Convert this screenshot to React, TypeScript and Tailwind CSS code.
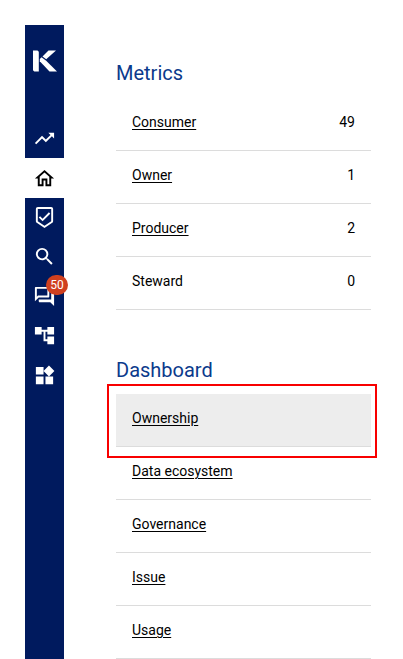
import React from 'react';
import clsx from 'clsx';
import type { IconType } from 'react-icons';
import {
  MdAccountTree,
  MdOutlineBeenhere,
  MdOutlineForum,
  MdOutlineHome,
  MdSearch,
  MdTrendingUp,
  MdWidgets,
} from 'react-icons/md';

interface NavItem {
  label: string;
  icon: IconType;
  active?: boolean;
  badge?: number;
}

const navItems: NavItem[] = [
  { label: 'Trends', icon: MdTrendingUp },
  { label: 'Home', icon: MdOutlineHome, active: true },
  { label: 'Governance', icon: MdOutlineBeenhere },
  { label: 'Search', icon: MdSearch },
  { label: 'Issues', icon: MdOutlineForum, badge: 50 },
  { label: 'Lineage', icon: MdAccountTree },
  { label: 'Apps', icon: MdWidgets },
];

const metrics = [
  { name: 'Consumer', count: 49, linked: true },
  { name: 'Owner', count: 1, linked: true },
  { name: 'Producer', count: 2, linked: true },
  { name: 'Steward', count: 0, linked: false },
];

const dashboards = ['Ownership', 'Data ecosystem', 'Governance', 'Issue', 'Usage'];

const Logo = () => (
  <svg viewBox="0 0 24 22" className="w-6 h-[22px] fill-white" aria-hidden="true">
    <path d="M0 .5h4.500l1.300 1.300V21.500H1.300L0 20.200z" />
    <path d="M15.500 .5H23L13.200 9.300 9.500 6.400z" />
    <path d="M8.600 7.200l4.600 3.600L24 21.500h-7.500L6.800 11.200V9z" />
  </svg>
);

const Sidebar = () => (
  <nav className="w-[39px] shrink-0 bg-[#001a5e]">
    <a href="#" aria-label="K" className="flex h-[94px] justify-center pt-[25px]">
      <Logo />
    </a>
    <div className="grid grid-rows-7 h-[276px]">
      {navItems.map(({ label, icon: Icon, active, badge }) => (
        <button
          key={label}
          type="button"
          aria-label={label}
          className={clsx(
            'relative flex items-center justify-center cursor-pointer',
            active ? 'bg-white text-black' : 'text-white'
          )}
        >
          <Icon className="w-[23px] h-[23px]" />
          {badge && (
            <span className="absolute -top-0.5 -right-1 flex w-[22px] h-5 items-center justify-center rounded-full bg-[#d0401f] text-xs text-white">
              {badge}
            </span>
          )}
        </button>
      ))}
    </div>
  </nav>
);

const SectionTitle = ({ children }: { children: React.ReactNode }) => (
  <h2 className="text-xl leading-6 text-[#0b3a8c]">{children}</h2>
);

export default function App() {
  return (
    <div className="flex min-h-screen bg-white pt-[25px] pl-[25px] font-['Roboto',sans-serif] text-sm text-black">
      <Sidebar />
      <main className="flex-1 pl-[52px] pr-8 pt-9">
        <section>
          <SectionTitle>Metrics</SectionTitle>
          <table className="mt-3 w-full border-collapse">
            <tbody>
              {metrics.map(({ name, count, linked }) => (
                <tr key={name} className="h-[53px] border-b border-[#dcdcdc]">
                  <th scope="row" className="pb-[3px] pl-4 text-left font-normal">
                    {linked ? (
                      <a href="#" className="underline underline-offset-2">
                        {name}
                      </a>
                    ) : (
                      name
                    )}
                  </th>
                  <td className="pb-[3px] pr-4 text-right">{count}</td>
                </tr>
              ))}
            </tbody>
          </table>
        </section>

        <section className="mt-12">
          <SectionTitle>Dashboard</SectionTitle>
          <ul className="mt-3">
            {dashboards.map((name, idx) => (
              <li
                key={name}
                className={clsx(
                  'relative flex h-[53px] items-center border-b border-[#dcdcdc] pb-[3px] pl-4',
                  idx === 0 && 'bg-[#ededed]'
                )}
              >
                <a href="#" className="underline underline-offset-2">
                  {name}
                </a>
                {idx === 0 && (
                  <span className="pointer-events-none absolute -top-2.5 -right-1.5 -bottom-3 -left-[9px] border-2 border-[#f80000]" />
                )}
              </li>
            ))}
          </ul>
        </section>
      </main>
    </div>
  );
}
